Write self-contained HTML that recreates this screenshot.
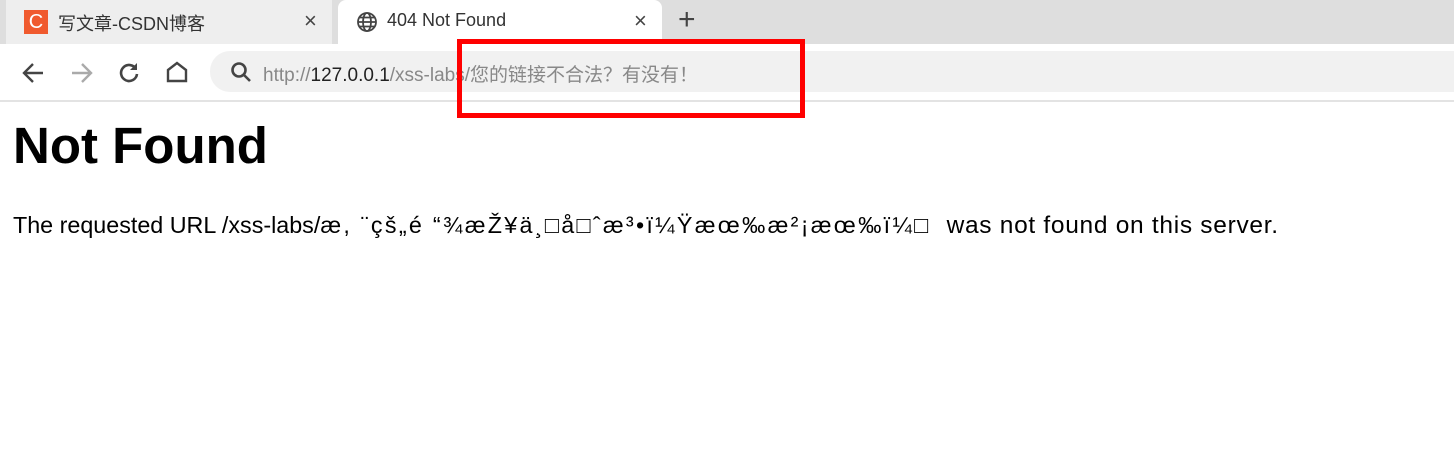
<!DOCTYPE html>
<html><head><meta charset="utf-8"><style>
*{margin:0;padding:0;box-sizing:border-box}
body{width:1454px;height:463px;background:#fff;position:relative;overflow:hidden;font-family:"Liberation Sans","Noto Sans CJK SC",sans-serif}
.tabbar{position:absolute;left:0;top:0;width:1454px;height:44px;background:#dedede}
.tab1{position:absolute;left:6px;top:0;width:326px;height:44px;background:#eeeeee}
.tab2{position:absolute;left:338px;top:0;width:324px;height:46px;background:#fff;border-radius:8px 8px 0 0}
.tt{position:absolute;top:10px;font-size:18px;color:#333;white-space:nowrap}
.x{position:absolute;top:8px;font-size:22px;color:#444}
.toolbar{position:absolute;left:0;top:44px;width:1454px;height:56px;background:#fff}
.line{position:absolute;left:0;top:100px;width:1454px;height:2px;background:#e3e3e3}
.omni{position:absolute;left:210px;top:51px;width:1250px;height:41px;background:#f1f1f1;border-radius:20px 0 0 20px}
.url{position:absolute;left:263px;top:60px;font-size:19px;color:#888;white-space:nowrap}
.url b{font-weight:normal;color:#222}
.red{position:absolute;left:457px;top:39px;width:348px;height:79px;border:5px solid #f00}
h1{position:absolute;left:13px;top:116px;font-size:51px;font-weight:bold;color:#000}
p{position:absolute;left:13px;top:212px;font-size:23.3px;color:#000;white-space:nowrap}
.g{letter-spacing:2.3px}
.t{display:inline-block;margin-left:16px;letter-spacing:0.7px;font-size:24.5px}
</style></head><body>
<div class="tabbar">
 <div class="tab1"></div>
 <div class="tab2"></div>
 <div style="position:absolute;left:24px;top:10px;width:24px;height:24px;background:#f05a2e;color:#fff;font-size:20px;text-align:center;line-height:24px">C</div>
 <div class="tt" style="left:58px">写文章-CSDN博客</div>
 <div class="x" style="left:304px">×</div>
 <svg style="position:absolute;left:356px;top:11px" width="22" height="22" viewBox="0 0 22 22" fill="none" stroke="#444" stroke-width="1.8"><circle cx="11" cy="11" r="9"/><ellipse cx="11" cy="11" rx="4" ry="9"/><path d="M2 11h18M3.5 6.5h15M3.5 15.5h15"/></svg>
 <div class="tt" style="left:387px">404 Not Found</div>
 <div class="x" style="left:634px">×</div>
 <div style="position:absolute;left:678px;top:3px;font-size:30px;color:#444">+</div>
</div>
<div class="toolbar">
 <svg style="position:absolute;left:20px;top:16px" width="26" height="26" viewBox="0 0 26 26" fill="none" stroke="#444" stroke-width="2.4"><path d="M23 13H4M13 4l-9 9 9 9"/></svg>
 <svg style="position:absolute;left:69px;top:16px" width="26" height="26" viewBox="0 0 26 26" fill="none" stroke="#aaa" stroke-width="2.4"><path d="M3 13h19M13 4l9 9-9 9"/></svg>
 <svg style="position:absolute;left:117px;top:16px" width="24" height="24" viewBox="0 0 24 24" fill="none" stroke="#444" stroke-width="2.6"><path d="M19 9A8 8 0 1 0 20 14"/><path d="M20 3v7h-7z" fill="#444" stroke-width="0"/></svg>
 <svg style="position:absolute;left:165px;top:16px" width="24" height="24" viewBox="0 0 24 24" fill="none" stroke="#444" stroke-width="2.4"><path d="M3 10l9-7 9 7v11H3z"/></svg>
</div>
<div class="omni"></div>
<svg style="position:absolute;left:229px;top:60px" width="24" height="24" viewBox="0 0 24 24" fill="none" stroke="#444" stroke-width="2.6"><circle cx="10" cy="10" r="6.5"/><path d="M15 15l6 6"/></svg>
<div class="url">http://<b>127.0.0.1</b>/xss-labs/您的链接不合法？有没有！</div>
<div class="line"></div>
<div class="red"></div>
<h1>Not Found</h1>
<p>The requested URL /xss-labs/<span class="g">æ, ¨çš„é  “¾æŽ¥ä¸□å□ˆæ³•ï¼Ÿæœ‰æ²¡æœ‰ï¼□</span><span class="t">was not found on this server.</span></p>
</body></html>
